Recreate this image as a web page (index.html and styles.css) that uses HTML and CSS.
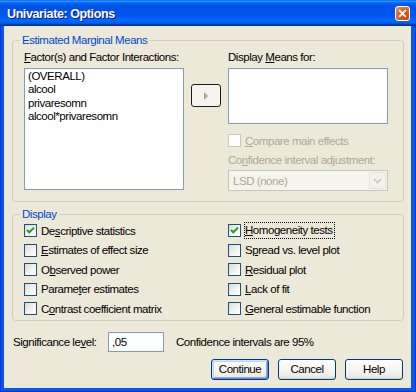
FILE: index.html
```html
<!DOCTYPE html>
<html>
<head>
<meta charset="utf-8">
<title>Univariate: Options</title>
<link rel="stylesheet" href="styles.css">
</head>
<body>
<div class="window">
  <div class="titlebar">
    <span class="title">Univariate: Options</span>
    <span class="close">
      <svg width="14" height="14" viewBox="0 0 14 14"><path d="M4 4 L10 10 M10 4 L4 10" stroke="#fff" stroke-width="1.8" stroke-linecap="square"/></svg>
    </span>
  </div>
  <div class="client">
    <fieldset class="group emm">
      <legend>Estimated Marginal Means</legend>
      <div class="emm-grid">
        <div class="col">
          <div class="label"><u>F</u>actor(s) and Factor Interactions:</div>
          <div class="listbox factors">
            <div>(OVERALL)</div>
            <div>alcool</div>
            <div>privaresomn</div>
            <div>alcool*privaresomn</div>
          </div>
        </div>
        <div class="mid">
          <span class="btn arrow">
            <svg width="5" height="8" viewBox="0 0 5 8"><path d="M0 0 L4 4 L0 8 Z" fill="#ACA899"/></svg>
          </span>
        </div>
        <div class="col">
          <div class="label">Display <u>M</u>eans for:</div>
          <div class="listbox means"></div>
          <div class="check disabled compare"><span class="box"></span><span><u>C</u>ompare main effects</span></div>
          <div class="label disabled sub">Co<u>n</u>fidence interval adjustment:</div>
          <div class="select">
            <span class="sel-text">LSD (none)</span>
            <span class="drop">
              <svg width="9" height="6" viewBox="0 0 9 6"><path d="M1 1 L4.5 4.5 L8 1" stroke="#C9C7BA" stroke-width="1.6" fill="none"/></svg>
            </span>
          </div>
        </div>
      </div>
    </fieldset>

    <fieldset class="group display">
      <legend>Display</legend>
      <div class="checks">
        <div class="check"><span class="box on"><svg width="11" height="11" viewBox="0 0 11 11"><path d="M2 5 L4.3 7.3 L9 2.6" stroke="#21A121" stroke-width="2" fill="none"/></svg></span><span>De<u>s</u>criptive statistics</span></div>
        <div class="check"><span class="box on"><svg width="11" height="11" viewBox="0 0 11 11"><path d="M2 5 L4.3 7.3 L9 2.6" stroke="#21A121" stroke-width="2" fill="none"/></svg></span><span class="focus"><u>H</u>omogeneity tests</span></div>
        <div class="check"><span class="box"></span><span><u>E</u>stimates of effect size</span></div>
        <div class="check"><span class="box"></span><span>S<u>p</u>read vs. level plot</span></div>
        <div class="check"><span class="box"></span><span>O<u>b</u>served power</span></div>
        <div class="check"><span class="box"></span><span><u>R</u>esidual plot</span></div>
        <div class="check"><span class="box"></span><span>Parame<u>t</u>er estimates</span></div>
        <div class="check"><span class="box"></span><span><u>L</u>ack of fit</span></div>
        <div class="check"><span class="box"></span><span>C<u>o</u>ntrast coefficient matrix</span></div>
        <div class="check"><span class="box"></span><span><u>G</u>eneral estimable function</span></div>
      </div>
    </fieldset>

    <div class="sig">
      <span class="sig-label">Significance le<u>v</u>el:</span>
      <span class="input">,05</span>
      <span class="sig-note">Confidence intervals are 95%</span>
    </div>

    <div class="buttons">
      <span class="btn push default">Continue</span>
      <span class="btn push">Cancel</span>
      <span class="btn push">Help</span>
    </div>
  </div>
</div>
</body>
</html>
```

FILE: styles.css
```css
* { box-sizing: border-box; }
html, body { margin: 0; padding: 0; }
body {
  width: 416px;
  height: 392px;
  overflow: hidden;
  background: #fff;
  font-family: "Liberation Sans", Arial, sans-serif;
  font-size: 11.5px;
  letter-spacing: -0.45px;
  color: #000;
}
u { text-decoration: underline; text-underline-offset: 1px; }

.window {
  width: 416px;
  height: 392px;
  display: flex;
  flex-direction: column;
  background: #0A56E6;
  box-shadow: inset 1px 0 #0831D9, inset -1px 0 #0831D9, inset 0 -1px #0831D9;
}

.titlebar {
  height: 26px;
  flex: none;
  display: flex;
  align-items: center;
  justify-content: space-between;
  padding: 0 6px 0 7px;
  background: linear-gradient(to bottom, #0058ee 0%, #3593ff 4%, #288eff 6%, #127dff 8%, #036ffc 10%, #0262ee 14%, #0057e5 20%, #0054e3 24%, #0055eb 56%, #005bf5 66%, #026afe 76%, #0062ef 86%, #0052d6 92%, #0040ab 94%, #003092 100%);
}
.title {
  color: #fff;
  font-weight: bold;
  font-size: 12.5px;
  letter-spacing: -0.4px;
  text-shadow: 1px 1px #0F1089;
  margin-top: 1px;
}
.close {
  width: 15px;
  height: 15px;
  border: 1px solid #fff;
  border-radius: 3px;
  background: radial-gradient(circle at 80% 85%, #CC4600 0%, #DC6527 55%, #CD7546 70%, #E9A080 100%);
  display: flex;
  align-items: center;
  justify-content: center;
  margin-top: 1px;
}
.close svg { width: 13px; height: 13px; }

.client {
  flex: 1;
  margin: 0 5px 4px 4px;
  background: #ECE9D8;
  padding: 7px 7px 0 8px;
  display: flex;
  flex-direction: column;
}

.group {
  margin: 0;
  border: 1px solid #D0D0BF;
  border-radius: 4px;
  min-width: 0;
}
.group legend {
  padding: 0 2px;
  margin-left: -4px;
  color: #0046D5;
  line-height: 14px;
}
.emm { padding: 3px 0 10px 11px; }
.display { padding: 0 0 1px 11px; margin-top: 5px; }

.emm-grid {
  display: grid;
  grid-template-columns: 160px 30px 160px;
  column-gap: 7px;
  align-items: start;
}
.col { display: flex; flex-direction: column; }
.label { line-height: 14px; margin-bottom: 4px; white-space: nowrap; }
.disabled { color: #ACA899; }

.listbox {
  border: 1px solid #7F9DB9;
  background: #fff;
}
.factors { height: 122px; padding: 1px 3px; line-height: 13.4px; }
.means { height: 56px; }

.btn {
  display: flex;
  align-items: center;
  justify-content: center;
  border: 1px solid #003C74;
  border-radius: 3px;
  background: linear-gradient(to bottom, #FFFFFF 0%, #F4F3EE 60%, #ECEBE6 86%, #D6D0C5 100%);
}
.arrow {
  margin-top: 34px;
  width: 30px;
  height: 23px;
  border-color: #1E1E1E;
  background: #F5F4EF;
}

.check {
  display: flex;
  align-items: center;
  gap: 4px;
  white-space: nowrap;
}
.box {
  width: 13px;
  height: 13px;
  flex: none;
  border: 1px solid #1C5180;
  background: linear-gradient(135deg, #DCDCD7 0%, #F4F4F0 60%, #FFFFFF 100%);
  display: flex;
  align-items: center;
  justify-content: center;
}
.compare { margin-top: 10px; height: 13px; }
.compare .box { border-color: #CAC8BB; background: #fff; }
.sub { margin-top: 6px; margin-bottom: 3px; }

.select {
  height: 21px;
  border: 1px solid #C9C7BA;
  background: #F5F4EC;
  display: flex;
  align-items: stretch;
  padding: 1px;
}
.sel-text {
  flex: 1;
  color: #ACA899;
  padding-left: 3px;
  display: flex;
  align-items: center;
}
.drop {
  width: 17px;
  background: #F2F1EB;
  border: 1px solid #E6E4D8;
  border-radius: 2px;
  display: flex;
  align-items: center;
  justify-content: center;
}

.checks {
  display: grid;
  grid-template-columns: 204px 1fr;
  grid-auto-rows: 19.5px;
  align-items: center;
}
.focus { outline: 1px dotted #000; outline-offset: 0; padding: 1px 1px 2px 0; }

.sig {
  margin-top: 11px;
  height: 20px;
  display: flex;
  align-items: center;
  padding-left: 1px;
}
.sig-label { width: 95px; }
.input {
  width: 56px;
  height: 20px;
  border: 1px solid #7F9DB9;
  background: #fff;
  padding-left: 3px;
  display: flex;
  align-items: center;
}
.sig-note { margin-left: 12px; }

.buttons {
  margin-top: 7px;
  display: flex;
  justify-content: flex-end;
  gap: 9px;
  padding-right: 1px;
}
.push { width: 58px; height: 21px; }
.default {
  box-shadow: inset 1px 1px #CEE7FF, inset -1px -1px #6982EE, inset 2px 2px #BCD4F6, inset -2px -2px #89ADE4;
}
```
